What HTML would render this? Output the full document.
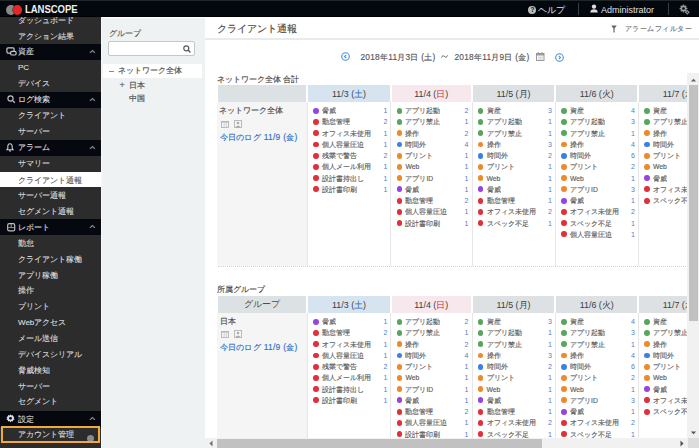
<!DOCTYPE html>
<html><head><meta charset="utf-8"><style>
*{box-sizing:border-box}
html,body{margin:0;padding:0;width:699px;height:448px;overflow:hidden;background:#fff;font-family:"Liberation Sans",sans-serif;}
#grp div,#main div,body>div.abs{-webkit-text-stroke:0.15px currentColor}
.abs{position:absolute}
#top{position:absolute;left:0;top:0;width:699px;height:17px;background:#03080e;border-top:1px solid #1f2627;border-bottom:1.5px solid #000}
#side{position:absolute;left:0;top:17px;width:101px;height:431px;background:#2c2c2c;overflow:hidden}
#side .si,#side .sh,#side .ss{position:absolute;left:0;width:101px;height:16px;font-size:8px;color:#dcdcdc}
#side span{position:absolute;top:0.6px;line-height:16px;white-space:nowrap;-webkit-text-stroke:0.12px currentColor}
#side .sh{background:#05090f;height:15.9px}
#side .ss{background:#fff;color:#555;height:15px;margin-top:0.5px}
#grp{position:absolute;left:101px;top:18px;width:104px;height:430px;background:#eef2f3;border-left:1px solid #f7f8f9}
#main{position:absolute;left:205px;top:17px;width:494px;height:431px;background:#fff}
.th{position:absolute;height:17px;line-height:18.5px;text-align:center;font-size:8.9px;color:#3c3c3c;-webkit-text-stroke:0 !important}
.hsatbg{background:#d6e4f0} .hsunbg{background:#f6e8ec} .bg{background:#dde1e4}
.hsat{color:#2d6cc0;font-weight:normal} .hsun{color:#d3283a;font-weight:normal}
.it{position:absolute;height:11.2px;line-height:11.2px;font-size:6.8px;color:#5e5e5e;white-space:nowrap}
.it i{position:absolute;left:5.6px;top:2.7px;width:5.8px;height:5.8px;border-radius:50%}
.vl{position:absolute;width:1px;background:#e6e6e6}
.it span{position:absolute;left:14.5px;top:0}
.it em{position:absolute;right:3.5px;top:0;font-style:normal;color:#4f7dcc;font-size:7px;-webkit-text-stroke:0}
</style></head><body>
<div id="top">
 <div class="abs" style="left:6px;top:3.7px;width:9.7px;height:9.9px;border-radius:50%;background:#8a8a8a"></div>
 <div class="abs" style="left:12.5px;top:3.7px;width:9.4px;height:9.9px;border-radius:50%;background:#e32626;box-shadow:-0.6px 0 0 #5a1a1a"></div>
 <div class="abs" style="left:24.5px;top:0.8px;line-height:15px;font-size:10.6px;transform:scaleX(0.9);transform-origin:0 0;font-weight:bold;color:#f0f0f0;letter-spacing:-0.05px">LANSCOPE</div>
 <div class="abs" style="left:528.3px;top:5px;width:8.2px;height:8.2px;border-radius:50%;background:#bdbdbd;color:#060b12;font-size:6.5px;font-weight:bold;line-height:8.3px;text-align:center">?</div>
 <div class="abs" style="left:537.5px;top:2px;line-height:15px;font-size:8.6px;color:#e6e6e6">ヘルプ</div>
 <div class="abs" style="left:577.5px;top:2px;width:1px;height:12px;background:#3a3f45"></div>
 <svg class="abs" style="left:590px;top:3px" width="8" height="9" viewBox="0 0 8 9"><circle cx="4" cy="2.6" r="2.2" fill="#ddd"/><path d="M0.3 8.6 C0.3 5.8 1.8 5.2 4 5.2 C6.2 5.2 7.7 5.8 7.7 8.6Z" fill="#ddd"/></svg>
 <div class="abs" style="left:601px;top:1.5px;line-height:15px;font-size:9px;color:#e0e0e0">Administrator</div>
 <div class="abs" style="left:667.5px;top:2px;width:1px;height:12px;background:#3a3f45"></div>
 <svg class="abs" style="left:678.5px;top:3px" width="11" height="11" viewBox="0 0 11 11"><g fill="#9a9a9a"><circle cx="4.5" cy="4.5" r="2.9"/><rect x="3.8" y="0.6" width="1.4" height="7.8"/><rect x="0.6" y="3.8" width="7.8" height="1.4"/><rect x="3.8" y="0.6" width="1.4" height="7.8" transform="rotate(45 4.5 4.5)"/><rect x="3.8" y="0.6" width="1.4" height="7.8" transform="rotate(-45 4.5 4.5)"/></g><circle cx="4.5" cy="4.5" r="1.3" fill="#03080e"/><g fill="#9a9a9a"><circle cx="8.3" cy="8.3" r="1.7"/><rect x="7.9" y="6" width="0.8" height="4.6"/><rect x="6" y="7.9" width="4.6" height="0.8"/></g><circle cx="8.3" cy="8.3" r="0.7" fill="#03080e"/></svg>
</div>
<div id="side"><div class="si" style="top:-5.01px"><span style="left:18px;margin-top:-0.00px">ダッシュボード</span></div><div class="si" style="top:10.94px"><span style="left:18px;margin-top:-0.00px">アクション結果</span></div><div class="sh" style="top:26.90px"><svg width="11" height="9" viewBox="0 0 11 9" style="position:absolute;left:5.5px;top:3px"><rect x="0.9" y="0.9" width="7.2" height="5.2" rx="1" fill="none" stroke="#c8c8c8" stroke-width="1.2"/><rect x="4.6" y="4.4" width="5.5" height="3.6" rx="1.2" fill="#090d13" stroke="#c8c8c8" stroke-width="1.2"/></svg><span style="left:18.2px">資産</span><svg width="7" height="5" viewBox="0 0 7 5" style="position:absolute;left:89px;top:5px"><path d="M0.9 3.9 L3.4 1.5 L5.9 3.9" fill="none" stroke="#8a8a8a" stroke-width="1.2"/></svg></div><div class="si" style="top:42.86px"><span style="left:18px;margin-top:-0.00px">PC</span></div><div class="si" style="top:58.81px"><span style="left:18px;margin-top:-0.00px">デバイス</span></div><div class="sh" style="top:74.77px"><svg width="9" height="9" viewBox="0 0 9 9" style="position:absolute;left:6.5px;top:3.5px"><circle cx="3.5" cy="3.5" r="2.6" fill="none" stroke="#c4c4c4" stroke-width="1.1"/><line x1="5.4" y1="5.4" x2="7.8" y2="7.8" stroke="#c4c4c4" stroke-width="1.3"/></svg><span style="left:18.2px">ログ検索</span><svg width="7" height="5" viewBox="0 0 7 5" style="position:absolute;left:89px;top:5px"><path d="M0.9 3.9 L3.4 1.5 L5.9 3.9" fill="none" stroke="#8a8a8a" stroke-width="1.2"/></svg></div><div class="si" style="top:90.73px"><span style="left:18px;margin-top:-0.00px">クライアント</span></div><div class="si" style="top:106.69px"><span style="left:18px;margin-top:-0.00px">サーバー</span></div><div class="sh" style="top:122.64px"><svg width="8" height="9" viewBox="0 0 8 9" style="position:absolute;left:6px;top:3.5px"><path d="M4 0.8 C2.3 0.8 1.8 2.2 1.8 3.6 L1.8 5.6 L0.8 6.8 L7.2 6.8 L6.2 5.6 L6.2 3.6 C6.2 2.2 5.7 0.8 4 0.8Z" fill="none" stroke="#ccc" stroke-width="1.1"/><circle cx="4" cy="7.8" r="0.9" fill="#ccc"/></svg><span style="left:18.2px">アラーム</span><svg width="7" height="5" viewBox="0 0 7 5" style="position:absolute;left:89px;top:5px"><path d="M0.9 3.9 L3.4 1.5 L5.9 3.9" fill="none" stroke="#8a8a8a" stroke-width="1.2"/></svg></div><div class="si" style="top:138.60px"><span style="left:18px;margin-top:-0.00px">サマリー</span></div><div class="ss" style="top:154.56px"><span style="left:18px">クライアント通報</span></div><div class="si" style="top:170.51px"><span style="left:18px;margin-top:-0.00px">サーバー通報</span></div><div class="si" style="top:186.47px"><span style="left:18px;margin-top:-0.00px">セグメント通報</span></div><div class="sh" style="top:202.43px"><svg width="9" height="9" viewBox="0 0 9 9" style="position:absolute;left:6.5px;top:3.8px"><rect x="0.7" y="0.7" width="7" height="7.2" rx="1.5" fill="none" stroke="#c0c0c0" stroke-width="1.2"/><rect x="3.6" y="1" width="1.2" height="3" fill="#8a8a8a"/><rect x="1.2" y="4" width="6" height="1.1" fill="#8a8a8a"/></svg><span style="left:18.2px">レポート</span><svg width="7" height="5" viewBox="0 0 7 5" style="position:absolute;left:89px;top:5px"><path d="M0.9 3.9 L3.4 1.5 L5.9 3.9" fill="none" stroke="#8a8a8a" stroke-width="1.2"/></svg></div><div class="si" style="top:218.38px"><span style="left:18px;margin-top:-0.10px">勤怠</span></div><div class="si" style="top:234.34px"><span style="left:18px;margin-top:-0.20px">クライアント稼働</span></div><div class="si" style="top:250.30px"><span style="left:18px;margin-top:-0.30px">アプリ稼働</span></div><div class="si" style="top:266.25px"><span style="left:18px;margin-top:-0.40px">操作</span></div><div class="si" style="top:282.21px"><span style="left:18px;margin-top:-0.50px">プリント</span></div><div class="si" style="top:298.17px"><span style="left:18px;margin-top:-0.60px">Webアクセス</span></div><div class="si" style="top:314.13px"><span style="left:18px;margin-top:-0.70px">メール送信</span></div><div class="si" style="top:330.08px"><span style="left:18px;margin-top:-0.80px">デバイスシリアル</span></div><div class="si" style="top:346.04px"><span style="left:18px;margin-top:-0.90px">脅威検知</span></div><div class="si" style="top:362.00px"><span style="left:18px;margin-top:-1.00px">サーバー</span></div><div class="si" style="top:377.95px"><span style="left:18px;margin-top:-1.10px">セグメント</span></div><div class="sh" style="top:393.91px"><svg width="9" height="9" viewBox="0 0 10 10" style="position:absolute;left:5.5px;top:3.5px"><path d="M5 0.3 L6 1.6 L7.6 1 L7.8 2.6 L9.4 3.2 L8.6 4.6 L9.6 6 L8 6.6 L7.8 8.3 L6.2 7.9 L5 9.2 L3.8 7.9 L2.2 8.3 L2 6.6 L0.4 6 L1.4 4.6 L0.6 3.2 L2.2 2.6 L2.4 1 L4 1.6Z" fill="#ddd"/><circle cx="5" cy="4.8" r="1.6" fill="#0a0e14"/></svg><span style="left:18.2px">設定</span><svg width="7" height="5" viewBox="0 0 7 5" style="position:absolute;left:89px;top:5px"><path d="M0.9 3.9 L3.4 1.5 L5.9 3.9" fill="none" stroke="#8a8a8a" stroke-width="1.2"/></svg></div><div class="si" style="top:409.87px"><span style="left:18px">アカウント管理</span></div><div style="position:absolute;left:86.5px;top:417.87px;width:7px;height:7px;border-radius:50%;background:#8a8a8a"></div><div style="position:absolute;left:1px;top:409.37px;width:98.5px;height:16.5px;border:2px solid #f2a83a"></div></div>
<div id="grp">
 <div class="abs" style="left:6.5px;top:8.7px;line-height:12px;font-size:8.3px;color:#5a5a5a">グループ</div>
 <div class="abs" style="left:6px;top:22.8px;width:86.5px;height:15px;background:#fff;border:1px solid #c4c7ca;border-radius:2px"></div>
 <svg class="abs" style="left:81px;top:26.5px" width="8" height="8" viewBox="0 0 8 8"><circle cx="3.3" cy="3.3" r="2.5" fill="none" stroke="#555" stroke-width="1.2"/><line x1="5.1" y1="5.1" x2="7.4" y2="7.4" stroke="#555" stroke-width="1.4"/></svg>
 <div class="abs" style="left:1px;top:46px;width:99px;height:14px;background:#fff"></div>
 <div class="abs" style="left:6.5px;top:52.5px;width:5px;height:1px;background:#888"></div>
 <div class="abs" style="left:15.8px;top:46px;line-height:14px;font-size:8px;color:#4e4e4e">ネットワーク全体</div>
 <div class="abs" style="left:17.5px;top:61px;line-height:13px;font-size:9px;color:#666">+</div>
 <div class="abs" style="left:27px;top:60.5px;line-height:13px;font-size:8px;color:#4e4e4e">日本</div>
 <div class="abs" style="left:27px;top:74px;line-height:13px;font-size:8px;color:#4e4e4e">中国</div>
</div>
<div id="main">
 <div class="abs" style="left:11.5px;top:4px;line-height:15px;font-size:9.9px;color:#4a4a4a">クライアント通報</div>
 <svg class="abs" style="left:406px;top:8px" width="6" height="8" viewBox="0 0 6 8"><path d="M0.3 0.5 L5.7 0.5 L3.6 3.5 L3.6 7.5 L2.4 7.5 L2.4 3.5Z" fill="#666"/></svg>
 <div class="abs" style="left:419.5px;top:6px;line-height:12px;font-size:7.3px;letter-spacing:0.5px;color:#707070">アラームフィルター</div>
 <div class="abs" style="left:0;top:20.5px;width:494px;height:2px;background:#eaeaea"></div>
</div>
<svg class="abs" style="left:340.5px;top:52px" width="9" height="9" viewBox="0 0 9 9"><circle cx="4.5" cy="4.5" r="3.8" fill="none" stroke="#4a90d9" stroke-width="1.1"/><path d="M5.2 2.8 L3.5 4.5 L5.2 6.2" fill="none" stroke="#4a90d9" stroke-width="1.1"/></svg>
<div class="abs" style="left:360.5px;top:50.5px;line-height:12px;font-size:8.3px;letter-spacing:0.25px;color:#555">2018年11月3日 (土)</div><svg class="abs" style="left:440.5px;top:54px" width="7" height="5" viewBox="0 0 7 5"><path d="M0.4 3.6 C1.2 1.6 2.4 1.4 3.5 2.5 C4.6 3.6 5.8 3.4 6.6 1.4" fill="none" stroke="#555" stroke-width="0.9"/></svg><div class="abs" style="left:454.5px;top:50.5px;line-height:12px;font-size:8.3px;letter-spacing:0.25px;color:#555">2018年11月9日 (金)</div>
<svg class="abs" style="left:555px;top:52.5px" width="9" height="9" viewBox="0 0 9 9"><circle cx="4.5" cy="4.5" r="3.8" fill="none" stroke="#4a90d9" stroke-width="1.1"/><path d="M3.8 2.8 L5.5 4.5 L3.8 6.2" fill="none" stroke="#4a90d9" stroke-width="1.1"/></svg>
<svg class="abs" style="left:535.5px;top:52px" width="9" height="9" viewBox="0 0 9 9"><rect x="0.5" y="1.5" width="7.5" height="7" fill="none" stroke="#999" stroke-width="1"/><rect x="0.5" y="1.5" width="7.5" height="2" fill="#999"/><line x1="2.5" y1="0" x2="2.5" y2="2" stroke="#999"/><line x1="6" y1="0" x2="6" y2="2" stroke="#999"/><path d="M2 5.2 H7 M2 7 H7" stroke="#bbb" stroke-width="0.8"/></svg>
<div class="abs" style="left:216.5px;top:73.5px;line-height:12px;font-size:8px;color:#4a4a4a">ネットワーク全体 合計</div>
<div class="abs" style="left:217px;top:102px;width:90px;height:164px;background:#f5f5f5"></div><div class="abs" style="left:218px;top:265.5px;width:470px;height:1px;border-top:1px dotted #d5d5d5"></div>
<div class="abs" style="left:219px;top:105px;line-height:12px;font-size:8px;color:#4a4a4a">ネットワーク全体</div>
<svg class="abs" style="left:221px;top:119.5px" width="8" height="8" viewBox="0 0 8 8"><rect x="0.5" y="1.5" width="7" height="6" fill="none" stroke="#b5b5b5" stroke-width="0.9"/><rect x="0.5" y="1.2" width="7" height="1.4" fill="#b5b5b5"/><line x1="3.2" y1="3" x2="3.2" y2="7.5" stroke="#c8c8c8" stroke-width="0.8"/><line x1="5.4" y1="3" x2="5.4" y2="7.5" stroke="#c8c8c8" stroke-width="0.8"/></svg><svg class="abs" style="left:234px;top:119.5px" width="8" height="8" viewBox="0 0 8 8"><rect x="0.5" y="0.5" width="7" height="7" fill="none" stroke="#b5b5b5" stroke-width="0.9"/><circle cx="4" cy="3" r="1.3" fill="#aaa"/><path d="M1.6 7.5 C1.8 5.2 6.2 5.2 6.4 7.5Z" fill="#aaa"/></svg><div class="abs" style="left:219.5px;top:130.5px;line-height:12px;font-size:8.4px;letter-spacing:0.3px;color:#2f6dcc">今日のログ 11/9 (金)</div>
<div class="abs" style="left:217px;top:284px;line-height:12px;font-size:8px;color:#4a4a4a">所属グループ</div>
<div class="abs" style="left:217px;top:313px;width:90px;height:125px;background:#f5f5f5"></div>
<div class="abs" style="left:219.5px;top:315.5px;line-height:12px;font-size:8px;color:#4a4a4a">日本</div>
<svg class="abs" style="left:221px;top:330px" width="8" height="8" viewBox="0 0 8 8"><rect x="0.5" y="1.5" width="7" height="6" fill="none" stroke="#b5b5b5" stroke-width="0.9"/><rect x="0.5" y="1.2" width="7" height="1.4" fill="#b5b5b5"/><line x1="3.2" y1="3" x2="3.2" y2="7.5" stroke="#c8c8c8" stroke-width="0.8"/><line x1="5.4" y1="3" x2="5.4" y2="7.5" stroke="#c8c8c8" stroke-width="0.8"/></svg><svg class="abs" style="left:234px;top:330px" width="8" height="8" viewBox="0 0 8 8"><rect x="0.5" y="0.5" width="7" height="7" fill="none" stroke="#b5b5b5" stroke-width="0.9"/><circle cx="4" cy="3" r="1.3" fill="#aaa"/><path d="M1.6 7.5 C1.8 5.2 6.2 5.2 6.4 7.5Z" fill="#aaa"/></svg><div class="abs" style="left:219.5px;top:340.5px;line-height:12px;font-size:8.4px;letter-spacing:0.3px;color:#2f6dcc">今日のログ 11/9 (金)</div>
<div class="abs" style="left:0;top:0;width:688px;height:438px;overflow:hidden"><div class="th" style="left:218px;top:85px;width:88px;background:#dce1e4;font-size:8.6px;line-height:16.5px;color:#4a4a4a"></div><div class="th hsatbg" style="left:308.30px;top:85px;width:81.55px">11/3 (<b class="hsat">土</b>)</div><div class="vl" style="left:307.20px;top:102px;height:164px"></div><div class="it" style="left:307.70px;top:105.20px;width:83.25px"><i style="background:#9544e0"></i><span>脅威</span><em>1</em></div><div class="it" style="left:307.70px;top:116.43px;width:83.25px"><i style="background:#e0303a"></i><span>勤怠管理</span><em>2</em></div><div class="it" style="left:307.70px;top:127.66px;width:83.25px"><i style="background:#e0303a"></i><span>オフィス未使用</span><em>1</em></div><div class="it" style="left:307.70px;top:138.89px;width:83.25px"><i style="background:#e0303a"></i><span>個人容量圧迫</span><em>1</em></div><div class="it" style="left:307.70px;top:150.12px;width:83.25px"><i style="background:#e0303a"></i><span>残業で警告</span><em>2</em></div><div class="it" style="left:307.70px;top:161.35px;width:83.25px"><i style="background:#e0303a"></i><span>個人メール利用</span><em>1</em></div><div class="it" style="left:307.70px;top:172.58px;width:83.25px"><i style="background:#e0303a"></i><span>設計書持出し</span><em>1</em></div><div class="it" style="left:307.70px;top:183.81px;width:83.25px"><i style="background:#e0303a"></i><span>設計書印刷</span><em>1</em></div><div class="th hsunbg" style="left:391.55px;top:85px;width:79.35px">11/4 (<b class="hsun">日</b>)</div><div class="vl" style="left:390.45px;top:102px;height:164px"></div><div class="it" style="left:390.95px;top:105.20px;width:81.05px"><i style="background:#5aa55e"></i><span>アプリ起動</span><em>2</em></div><div class="it" style="left:390.95px;top:116.43px;width:81.05px"><i style="background:#5aa55e"></i><span>アプリ禁止</span><em>1</em></div><div class="it" style="left:390.95px;top:127.66px;width:81.05px"><i style="background:#ec8a2c"></i><span>操作</span><em>2</em></div><div class="it" style="left:390.95px;top:138.89px;width:81.05px"><i style="background:#3b80e6"></i><span>時間外</span><em>4</em></div><div class="it" style="left:390.95px;top:150.12px;width:81.05px"><i style="background:#ec8a2c"></i><span>プリント</span><em>1</em></div><div class="it" style="left:390.95px;top:161.35px;width:81.05px"><i style="background:#ec8a2c"></i><span>Web</span><em>1</em></div><div class="it" style="left:390.95px;top:172.58px;width:81.05px"><i style="background:#ec8a2c"></i><span>アプリID</span><em>1</em></div><div class="it" style="left:390.95px;top:183.81px;width:81.05px"><i style="background:#9544e0"></i><span>脅威</span><em>1</em></div><div class="it" style="left:390.95px;top:195.04px;width:81.05px"><i style="background:#e0303a"></i><span>勤怠管理</span><em>2</em></div><div class="it" style="left:390.95px;top:206.27px;width:81.05px"><i style="background:#e0303a"></i><span>個人容量圧迫</span><em>1</em></div><div class="it" style="left:390.95px;top:217.50px;width:81.05px"><i style="background:#e0303a"></i><span>設計書印刷</span><em>1</em></div><div class="th bg" style="left:472.60px;top:85px;width:81.80px">11/5 (月)</div><div class="vl" style="left:471.50px;top:102px;height:164px"></div><div class="it" style="left:472.00px;top:105.20px;width:83.50px"><i style="background:#5aa55e"></i><span>資産</span><em>3</em></div><div class="it" style="left:472.00px;top:116.43px;width:83.50px"><i style="background:#5aa55e"></i><span>アプリ起動</span><em>1</em></div><div class="it" style="left:472.00px;top:127.66px;width:83.50px"><i style="background:#5aa55e"></i><span>アプリ禁止</span><em>1</em></div><div class="it" style="left:472.00px;top:138.89px;width:83.50px"><i style="background:#ec8a2c"></i><span>操作</span><em>3</em></div><div class="it" style="left:472.00px;top:150.12px;width:83.50px"><i style="background:#3b80e6"></i><span>時間外</span><em>2</em></div><div class="it" style="left:472.00px;top:161.35px;width:83.50px"><i style="background:#ec8a2c"></i><span>プリント</span><em>1</em></div><div class="it" style="left:472.00px;top:172.58px;width:83.50px"><i style="background:#ec8a2c"></i><span>Web</span><em>1</em></div><div class="it" style="left:472.00px;top:183.81px;width:83.50px"><i style="background:#9544e0"></i><span>脅威</span><em>1</em></div><div class="it" style="left:472.00px;top:195.04px;width:83.50px"><i style="background:#e0303a"></i><span>勤怠管理</span><em>1</em></div><div class="it" style="left:472.00px;top:206.27px;width:83.50px"><i style="background:#e0303a"></i><span>オフィス未使用</span><em>2</em></div><div class="it" style="left:472.00px;top:217.50px;width:83.50px"><i style="background:#e0303a"></i><span>スペック不足</span><em>1</em></div><div class="th bg" style="left:556.10px;top:85px;width:81.30px">11/6 (火)</div><div class="vl" style="left:555.00px;top:102px;height:164px"></div><div class="it" style="left:555.50px;top:105.20px;width:83.00px"><i style="background:#5aa55e"></i><span>資産</span><em>4</em></div><div class="it" style="left:555.50px;top:116.43px;width:83.00px"><i style="background:#5aa55e"></i><span>アプリ起動</span><em>3</em></div><div class="it" style="left:555.50px;top:127.66px;width:83.00px"><i style="background:#5aa55e"></i><span>アプリ禁止</span><em>1</em></div><div class="it" style="left:555.50px;top:138.89px;width:83.00px"><i style="background:#ec8a2c"></i><span>操作</span><em>4</em></div><div class="it" style="left:555.50px;top:150.12px;width:83.00px"><i style="background:#3b80e6"></i><span>時間外</span><em>6</em></div><div class="it" style="left:555.50px;top:161.35px;width:83.00px"><i style="background:#ec8a2c"></i><span>プリント</span><em>2</em></div><div class="it" style="left:555.50px;top:172.58px;width:83.00px"><i style="background:#ec8a2c"></i><span>Web</span><em>1</em></div><div class="it" style="left:555.50px;top:183.81px;width:83.00px"><i style="background:#ec8a2c"></i><span>アプリID</span><em>3</em></div><div class="it" style="left:555.50px;top:195.04px;width:83.00px"><i style="background:#9544e0"></i><span>脅威</span><em>1</em></div><div class="it" style="left:555.50px;top:206.27px;width:83.00px"><i style="background:#e0303a"></i><span>オフィス未使用</span><em>2</em></div><div class="it" style="left:555.50px;top:217.50px;width:83.00px"><i style="background:#e0303a"></i><span>スペック不足</span><em>1</em></div><div class="it" style="left:555.50px;top:228.73px;width:83.00px"><i style="background:#e0303a"></i><span>個人容量圧迫</span><em>1</em></div><div class="th bg" style="left:639.10px;top:85px;width:81.30px">11/7 (水)</div><div class="vl" style="left:638.00px;top:102px;height:164px"></div><div class="it" style="left:638.50px;top:105.20px;width:83.00px"><i style="background:#5aa55e"></i><span>資産</span><em>4</em></div><div class="it" style="left:638.50px;top:116.43px;width:83.00px"><i style="background:#5aa55e"></i><span>アプリ禁止</span><em>1</em></div><div class="it" style="left:638.50px;top:127.66px;width:83.00px"><i style="background:#ec8a2c"></i><span>操作</span><em>4</em></div><div class="it" style="left:638.50px;top:138.89px;width:83.00px"><i style="background:#3b80e6"></i><span>時間外</span><em>3</em></div><div class="it" style="left:638.50px;top:150.12px;width:83.00px"><i style="background:#ec8a2c"></i><span>プリント</span><em>2</em></div><div class="it" style="left:638.50px;top:161.35px;width:83.00px"><i style="background:#ec8a2c"></i><span>Web</span><em>1</em></div><div class="it" style="left:638.50px;top:172.58px;width:83.00px"><i style="background:#9544e0"></i><span>脅威</span><em>1</em></div><div class="it" style="left:638.50px;top:183.81px;width:83.00px"><i style="background:#e0303a"></i><span>オフィス未使用</span><em>2</em></div><div class="it" style="left:638.50px;top:195.04px;width:83.00px"><i style="background:#e0303a"></i><span>スペック不足</span><em>1</em></div><div class="th" style="left:218px;top:296px;width:88px;background:#dce1e4;font-size:8.6px;line-height:16.5px;color:#4a4a4a">グループ</div><div class="th hsatbg" style="left:308.30px;top:296px;width:81.55px">11/3 (<b class="hsat">土</b>)</div><div class="vl" style="left:307.20px;top:313px;height:150px"></div><div class="it" style="left:307.70px;top:316.20px;width:83.25px"><i style="background:#9544e0"></i><span>脅威</span><em>1</em></div><div class="it" style="left:307.70px;top:327.43px;width:83.25px"><i style="background:#e0303a"></i><span>勤怠管理</span><em>2</em></div><div class="it" style="left:307.70px;top:338.66px;width:83.25px"><i style="background:#e0303a"></i><span>オフィス未使用</span><em>1</em></div><div class="it" style="left:307.70px;top:349.89px;width:83.25px"><i style="background:#e0303a"></i><span>個人容量圧迫</span><em>1</em></div><div class="it" style="left:307.70px;top:361.12px;width:83.25px"><i style="background:#e0303a"></i><span>残業で警告</span><em>2</em></div><div class="it" style="left:307.70px;top:372.35px;width:83.25px"><i style="background:#e0303a"></i><span>個人メール利用</span><em>1</em></div><div class="it" style="left:307.70px;top:383.58px;width:83.25px"><i style="background:#e0303a"></i><span>設計書持出し</span><em>1</em></div><div class="it" style="left:307.70px;top:394.81px;width:83.25px"><i style="background:#e0303a"></i><span>設計書印刷</span><em>1</em></div><div class="th hsunbg" style="left:391.55px;top:296px;width:79.35px">11/4 (<b class="hsun">日</b>)</div><div class="vl" style="left:390.45px;top:313px;height:150px"></div><div class="it" style="left:390.95px;top:316.20px;width:81.05px"><i style="background:#5aa55e"></i><span>アプリ起動</span><em>2</em></div><div class="it" style="left:390.95px;top:327.43px;width:81.05px"><i style="background:#5aa55e"></i><span>アプリ禁止</span><em>1</em></div><div class="it" style="left:390.95px;top:338.66px;width:81.05px"><i style="background:#ec8a2c"></i><span>操作</span><em>2</em></div><div class="it" style="left:390.95px;top:349.89px;width:81.05px"><i style="background:#3b80e6"></i><span>時間外</span><em>4</em></div><div class="it" style="left:390.95px;top:361.12px;width:81.05px"><i style="background:#ec8a2c"></i><span>プリント</span><em>1</em></div><div class="it" style="left:390.95px;top:372.35px;width:81.05px"><i style="background:#ec8a2c"></i><span>Web</span><em>1</em></div><div class="it" style="left:390.95px;top:383.58px;width:81.05px"><i style="background:#ec8a2c"></i><span>アプリID</span><em>1</em></div><div class="it" style="left:390.95px;top:394.81px;width:81.05px"><i style="background:#9544e0"></i><span>脅威</span><em>1</em></div><div class="it" style="left:390.95px;top:406.04px;width:81.05px"><i style="background:#e0303a"></i><span>勤怠管理</span><em>2</em></div><div class="it" style="left:390.95px;top:417.27px;width:81.05px"><i style="background:#e0303a"></i><span>個人容量圧迫</span><em>1</em></div><div class="it" style="left:390.95px;top:428.50px;width:81.05px"><i style="background:#e0303a"></i><span>設計書印刷</span><em>1</em></div><div class="th bg" style="left:472.60px;top:296px;width:81.80px">11/5 (月)</div><div class="vl" style="left:471.50px;top:313px;height:150px"></div><div class="it" style="left:472.00px;top:316.20px;width:83.50px"><i style="background:#5aa55e"></i><span>資産</span><em>3</em></div><div class="it" style="left:472.00px;top:327.43px;width:83.50px"><i style="background:#5aa55e"></i><span>アプリ起動</span><em>1</em></div><div class="it" style="left:472.00px;top:338.66px;width:83.50px"><i style="background:#5aa55e"></i><span>アプリ禁止</span><em>1</em></div><div class="it" style="left:472.00px;top:349.89px;width:83.50px"><i style="background:#ec8a2c"></i><span>操作</span><em>3</em></div><div class="it" style="left:472.00px;top:361.12px;width:83.50px"><i style="background:#3b80e6"></i><span>時間外</span><em>2</em></div><div class="it" style="left:472.00px;top:372.35px;width:83.50px"><i style="background:#ec8a2c"></i><span>プリント</span><em>1</em></div><div class="it" style="left:472.00px;top:383.58px;width:83.50px"><i style="background:#ec8a2c"></i><span>Web</span><em>1</em></div><div class="it" style="left:472.00px;top:394.81px;width:83.50px"><i style="background:#9544e0"></i><span>脅威</span><em>1</em></div><div class="it" style="left:472.00px;top:406.04px;width:83.50px"><i style="background:#e0303a"></i><span>勤怠管理</span><em>1</em></div><div class="it" style="left:472.00px;top:417.27px;width:83.50px"><i style="background:#e0303a"></i><span>オフィス未使用</span><em>2</em></div><div class="it" style="left:472.00px;top:428.50px;width:83.50px"><i style="background:#e0303a"></i><span>スペック不足</span><em>1</em></div><div class="th bg" style="left:556.10px;top:296px;width:81.30px">11/6 (火)</div><div class="vl" style="left:555.00px;top:313px;height:150px"></div><div class="it" style="left:555.50px;top:316.20px;width:83.00px"><i style="background:#5aa55e"></i><span>資産</span><em>4</em></div><div class="it" style="left:555.50px;top:327.43px;width:83.00px"><i style="background:#5aa55e"></i><span>アプリ起動</span><em>3</em></div><div class="it" style="left:555.50px;top:338.66px;width:83.00px"><i style="background:#5aa55e"></i><span>アプリ禁止</span><em>1</em></div><div class="it" style="left:555.50px;top:349.89px;width:83.00px"><i style="background:#ec8a2c"></i><span>操作</span><em>4</em></div><div class="it" style="left:555.50px;top:361.12px;width:83.00px"><i style="background:#3b80e6"></i><span>時間外</span><em>6</em></div><div class="it" style="left:555.50px;top:372.35px;width:83.00px"><i style="background:#ec8a2c"></i><span>プリント</span><em>2</em></div><div class="it" style="left:555.50px;top:383.58px;width:83.00px"><i style="background:#ec8a2c"></i><span>Web</span><em>1</em></div><div class="it" style="left:555.50px;top:394.81px;width:83.00px"><i style="background:#ec8a2c"></i><span>アプリID</span><em>3</em></div><div class="it" style="left:555.50px;top:406.04px;width:83.00px"><i style="background:#9544e0"></i><span>脅威</span><em>1</em></div><div class="it" style="left:555.50px;top:417.27px;width:83.00px"><i style="background:#e0303a"></i><span>オフィス未使用</span><em>2</em></div><div class="it" style="left:555.50px;top:428.50px;width:83.00px"><i style="background:#e0303a"></i><span>スペック不足</span><em>1</em></div><div class="it" style="left:555.50px;top:439.73px;width:83.00px"><i style="background:#e0303a"></i><span>個人容量圧迫</span><em>1</em></div><div class="th bg" style="left:639.10px;top:296px;width:81.30px">11/7 (水)</div><div class="vl" style="left:638.00px;top:313px;height:150px"></div><div class="it" style="left:638.50px;top:316.20px;width:83.00px"><i style="background:#5aa55e"></i><span>資産</span><em>4</em></div><div class="it" style="left:638.50px;top:327.43px;width:83.00px"><i style="background:#5aa55e"></i><span>アプリ禁止</span><em>1</em></div><div class="it" style="left:638.50px;top:338.66px;width:83.00px"><i style="background:#ec8a2c"></i><span>操作</span><em>4</em></div><div class="it" style="left:638.50px;top:349.89px;width:83.00px"><i style="background:#3b80e6"></i><span>時間外</span><em>3</em></div><div class="it" style="left:638.50px;top:361.12px;width:83.00px"><i style="background:#ec8a2c"></i><span>プリント</span><em>2</em></div><div class="it" style="left:638.50px;top:372.35px;width:83.00px"><i style="background:#ec8a2c"></i><span>Web</span><em>1</em></div><div class="it" style="left:638.50px;top:383.58px;width:83.00px"><i style="background:#9544e0"></i><span>脅威</span><em>1</em></div><div class="it" style="left:638.50px;top:394.81px;width:83.00px"><i style="background:#e0303a"></i><span>オフィス未使用</span><em>2</em></div><div class="it" style="left:638.50px;top:406.04px;width:83.00px"><i style="background:#e0303a"></i><span>スペック不足</span><em>1</em></div></div>
<div class="abs" style="left:687.3px;top:73px;width:11.7px;height:365px;background:#f1f1f1"></div>
<div class="abs" style="left:688.5px;top:85px;width:9.5px;height:235.5px;background:#c1c1c1"></div>
<div class="abs" style="left:205px;top:438px;width:483px;height:10px;background:#f1f1f1"></div>
<div class="abs" style="left:217px;top:438.5px;width:325px;height:9.5px;background:#c1c1c1"></div>
<div class="abs" style="left:688px;top:438px;width:11px;height:10px;background:#dcdcdc"></div>
<svg class="abs" style="left:689px;top:76.5px" width="9" height="6" viewBox="0 0 9 6"><path d="M1.8 4.4 L4.5 1.7 L7.2 4.4Z" fill="#666"/></svg>
<svg class="abs" style="left:689px;top:429.5px" width="9" height="6" viewBox="0 0 9 6"><path d="M1.8 1.6 L4.5 4.3 L7.2 1.6Z" fill="#555"/></svg>
<svg class="abs" style="left:207px;top:439px" width="8" height="9" viewBox="0 0 8 9"><path d="M5.5 1.5 L2.5 4.5 L5.5 7.5Z" fill="#707070"/></svg>
<svg class="abs" style="left:678px;top:439px" width="8" height="9" viewBox="0 0 8 9"><path d="M2.5 1.5 L5.5 4.5 L2.5 7.5Z" fill="#505050"/></svg>
</body></html>
